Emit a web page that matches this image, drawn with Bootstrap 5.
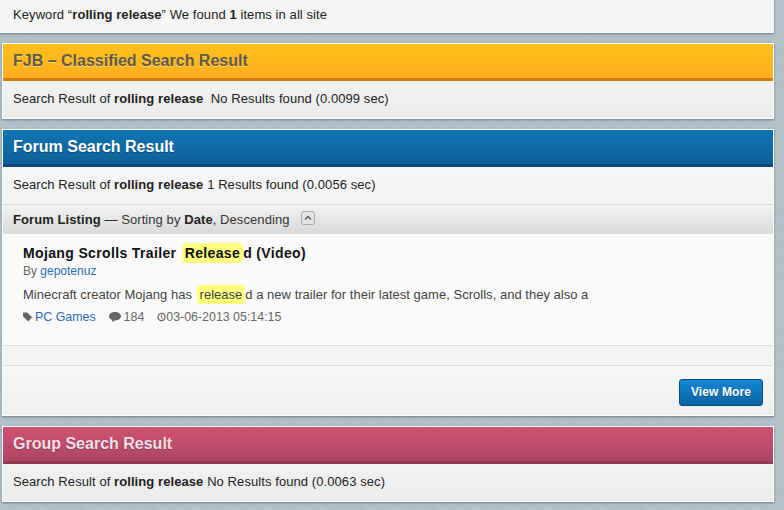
<!DOCTYPE html>
<html lang="en">
<head>
<meta charset="utf-8">
<title>Search</title>
<link rel="stylesheet" href="https://cdn.jsdelivr.net/npm/bootstrap@5.3.0/dist/css/bootstrap.min.css">
<style>
html,body{height:100%;overflow:hidden}
body{font-family:"Liberation Sans",Arial,sans-serif;font-size:13px;letter-spacing:.08px;line-height:18px;color:#222;background-color:#b1bfc8;background-image:repeating-linear-gradient(45deg,#aebcc5 0 1px,#b4c2ca 1px 3px);padding:0 10px 0 2px}
.sr-top{margin:-10px 0 10px -2px;height:43px;padding:16px 13px 0;background:#f5f5f5;border-bottom:1px solid #fff;box-shadow:0 1px 2px rgba(60,80,95,.6)}
.sr-panel{background:linear-gradient(#f7f7f7,#ececec);border:1px solid #fff;box-shadow:0 1px 2px rgba(60,80,95,.6);margin-bottom:10px}
.sr-head{height:37px;padding:0 10px;font-size:16px;letter-spacing:0;font-weight:700;line-height:33px;border-bottom:3px solid}
.sr-fjb{background:linear-gradient(#ffc01c,#ffae1e);border-color:#cf7a12;color:#5e5a44;text-shadow:0 1px 0 rgba(255,255,255,.4)}
.sr-forum{background:linear-gradient(#1175b2,#0e609a);border-color:#0b4a78;color:#fff;text-shadow:0 1px 1px rgba(0,0,0,.3)}
.sr-group{background:linear-gradient(#cf5372,#ab4563);border-color:#96384f;color:#f3dfe5;text-shadow:0 1px 1px rgba(0,0,0,.25)}
.sr-line{height:37px;padding:9px 10px 0}
.sr-listing{height:30px;padding:6px 10px 0;background:linear-gradient(#f3f3f3,#d9d9d9);border-top:1px solid #d8d8d8;color:#333}
.sr-listing b{color:#222}
.sr-toggle{display:inline-block;width:14px;height:14px;margin-left:8px;vertical-align:-1px;border:1px solid #aaa;border-radius:3px;background:#e4e4e4}
.sr-toggle svg{display:block}
.sr-body{height:112px;padding:10px 20px 0;background:#fafafa;border-bottom:1px solid #ddd;color:#444}
.sr-title{font-size:14px;font-weight:700;line-height:18px;color:#111;letter-spacing:.36px}
.sr-hl{background:#ffff80;border-radius:4px;padding:2px 3px;margin-left:1px}
.sr-by{font-size:12px;letter-spacing:0;line-height:17px;margin-top:1px;color:#666}
.sr-by a,.sr-meta a{color:#2a6db5;text-decoration:none}
.sr-text{margin-top:5px;line-height:20px;letter-spacing:.02px}
.sr-meta{margin-top:3px;gap:13px;font-size:12.4px;letter-spacing:0;color:#666}
.sr-meta svg{vertical-align:-1px;margin-right:2px}
.sr-meta svg.sr-bubble{margin-right:3px}
.sr-meta svg.sr-clock{margin-right:0}
.sr-gap{height:20px;background:#f4f4f4;border-bottom:1px solid #ddd}
.sr-foot{height:49px;padding:13px 10px 0 0;background:linear-gradient(#f7f7f7,#efefef)}
.sr-btn{width:84px;height:27px;padding:0;font-size:12px;letter-spacing:.1px;font-weight:700;line-height:25px;color:#fff;background:linear-gradient(#1487d6,#0c63a3);border:1px solid #0b4a78;border-radius:3px;text-shadow:0 1px 1px rgba(0,0,0,.3)}
</style>
</head>
<body>
<div class="sr-top">Keyword “<b>rolling release</b>” We found <b>1</b> items in all site</div>

<section class="sr-panel">
  <div class="sr-head sr-fjb">FJB – Classified Search Result</div>
  <div class="sr-line">Search Result of <b>rolling release</b>&nbsp; No Results found (0.0099 sec)</div>
</section>

<section class="sr-panel">
  <div class="sr-head sr-forum">Forum Search Result</div>
  <div class="sr-line">Search Result of <b>rolling release</b> 1 Results found (0.0056 sec)</div>
  <div class="sr-listing"><b>Forum Listing</b> — Sorting by <b>Date</b>, Descending <span class="sr-toggle"><svg width="12" height="12" viewBox="0 0 12 12"><path d="M3 7.500 6 4.500 9 7.500" fill="none" stroke="#555" stroke-width="1.400"/></svg></span></div>
  <div class="sr-body">
    <div class="sr-title">Mojang Scrolls Trailer <span class="sr-hl">Release</span>d (Video)</div>
    <div class="sr-by">By <a href="#">gepotenuz</a></div>
    <div class="sr-text">Minecraft creator Mojang has <span class="sr-hl">release</span>d a new trailer for their latest game, Scrolls, and they also a</div>
    <div class="sr-meta d-flex">
      <span><svg width="10" height="10" viewBox="0 0 11 10"><path d="M0 0H4.500L10 5.200 5.800 10 0 4.500Z" fill="#666"/></svg><a href="#">PC Games</a></span>
      <span><svg class="sr-bubble" width="12" height="10" viewBox="0 0 12 10"><path d="M6 0C9.300 0 12 1.800 12 4.200S9.300 8.400 6 8.400L3 10 3.300 7.900C1.300 7.200 0 5.900 0 4.200 0 1.800 2.700 0 6 0Z" fill="#666"/></svg>184</span>
      <span><svg class="sr-clock" width="9" height="10" viewBox="0 0 10 10"><circle cx="5" cy="5" r="4" fill="none" stroke="#666" stroke-width="1.300"/><path d="M5 2.500V5.300L6.800 6.800" fill="none" stroke="#666"/></svg>03-06-2013 05:14:15</span>
    </div>
  </div>
  <div class="sr-gap"></div>
  <div class="sr-foot d-flex justify-content-end align-items-start"><button type="button" class="btn sr-btn">View More</button></div>
</section>

<section class="sr-panel">
  <div class="sr-head sr-group">Group Search Result</div>
  <div class="sr-line">Search Result of <b>rolling release</b> No Results found (0.0063 sec)</div>
</section>
<script src="https://cdn.jsdelivr.net/npm/bootstrap@5.3.0/dist/js/bootstrap.bundle.min.js"></script>
</body>
</html>
